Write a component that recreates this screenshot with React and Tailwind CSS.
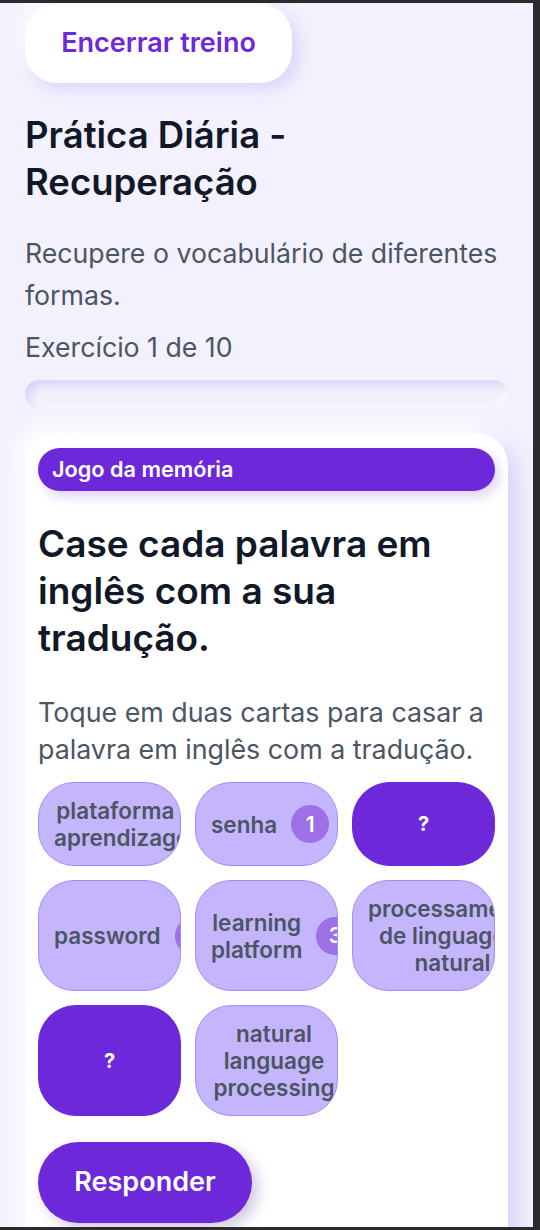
import React from "react";

const cards = [
  { text: "plataforma de aprendizagem" },
  { text: "senha", badge: "1" },
  { hidden: true },
  { text: "password", badge: "" },
  { text: "learning platform", badge: "3" },
  { text: "processamento de linguagem natural" },
  { hidden: true },
  { text: "natural language processing" },
];

const MemoryCard = ({ card }) => {
  if (card.hidden) {
    return (
      <div className="flex items-center justify-center rounded-[38px] border border-[#6d28d9] bg-[#6d28d9] text-[20px] font-bold text-white">
        ?
      </div>
    );
  }
  return (
    <div className="flex items-center gap-[14px] overflow-hidden rounded-[36px] border border-[#a78bfa] bg-[#c4b5fd] py-[14px] pl-[15px] text-[22.5px] font-semibold leading-[27px] text-[#4b5563]">
      <span className="text-center">{card.text}</span>
      {card.badge !== undefined && (
        <span className="flex h-[38px] w-[38px] shrink-0 items-center justify-center rounded-full bg-[#9d70e6] text-[21px] text-white">
          {card.badge}
        </span>
      )}
    </div>
  );
};

export default function App() {
  return (
    <div
      className="h-[1230px] overflow-hidden bg-[#2b2b2d] pt-[3px] pr-[7px] pb-[3px]"
      style={{ fontFamily: "Inter, 'Noto Sans', sans-serif" }}
    >
      <div className="h-full overflow-hidden bg-[#f3f1fd] px-[25px] pt-[1px]">
        <button className="flex h-[79px] w-[267px] items-center justify-center rounded-[32px] bg-white text-[27px] font-semibold text-[#6d28d9] shadow-[6px_6px_16px_rgba(167,139,250,0.3),-6px_-6px_16px_rgba(255,255,255,0.8)]">
          Encerrar treino
        </button>

        <h1 className="mt-[29px] text-[36.5px] font-semibold leading-[47px] text-[#111827]">
          Prática Diária -<br />
          Recuperação
        </h1>

        <p className="mt-[26px] text-[26.7px] leading-[42px] text-[#4b5563]">
          Recupere o vocabulário de diferentes formas.
        </p>

        <p className="mt-[13px] text-[26.7px] leading-[36px] text-[#4b5563]">
          Exercício 1 de 10
        </p>

        <div className="mt-[15px] h-[28px] rounded-full bg-[#f1effa] shadow-[inset_5px_5px_8px_rgba(167,139,250,0.28),inset_-4px_-4px_8px_rgba(255,255,255,0.7)]" />

        <div className="mt-[25px] rounded-[32px] bg-white px-[13px] pt-[15px] pb-[40px] shadow-[10px_10px_20px_rgba(167,139,250,0.3),-10px_-10px_20px_rgba(255,255,255,0.9)]">
          <div className="flex h-[43px] items-center rounded-full bg-[#6d28d9] px-[14px] text-[21.7px] font-semibold text-white shadow-[4px_6px_12px_rgba(109,40,217,0.2)]">
            Jogo da memória
          </div>

          <h2 className="mt-[29px] text-[37px] font-semibold leading-[47px] text-[#111827]">
            Case cada palavra em inglês com a sua tradução.
          </h2>

          <p className="mt-[33px] text-[26.8px] leading-[37px] text-[#4b5563]">
            Toque em duas cartas para casar a palavra em inglês com a tradução.
          </p>

          <div className="mt-[14px] grid grid-cols-3 gap-[14px]">
            {cards.map((card, i) => (
              <MemoryCard key={i} card={card} />
            ))}
          </div>

          <button className="mt-[26px] h-[81px] w-[214px] rounded-full bg-[#6d28d9] text-[27px] font-semibold text-white shadow-[6px_6px_14px_rgba(76,29,149,0.25),-6px_-6px_14px_rgba(255,255,255,0.9)]">
            Responder
          </button>
        </div>
      </div>
    </div>
  );
}
